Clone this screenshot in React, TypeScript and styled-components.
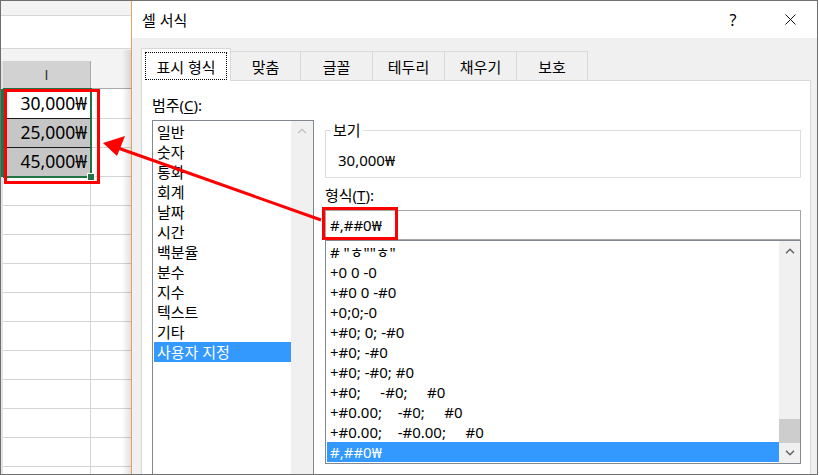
import React from 'react';
import styled, { createGlobalStyle } from 'styled-components';

const UI_FONT = `"Noto Sans", "Noto Sans CJK KR", sans-serif`;

const GlobalStyle = createGlobalStyle`
    html, body {
        margin: 0;
        padding: 0;
        background: #fff;
    }
    body {
        font-family: ${UI_FONT};
    }
    * {
        box-sizing: border-box;
    }
`;

const Frame = styled.div`
    position: relative;
    width: 818px;
    height: 475px;
    border: 1px solid #6f6f6f;
    display: flex;
    overflow: hidden;
    font-family: ${UI_FONT};
    color: #000;
`;

/* ---------- spreadsheet behind the dialog ---------- */

const Sheet = styled.div`
    position: relative;
    width: 130px;
    flex: none;
    display: flex;
    flex-direction: column;
    background: #fff;

    &::after {
        content: '';
        position: absolute;
        top: 49px;
        right: 0;
        bottom: 0;
        width: 9px;
        background: linear-gradient(to right, rgba(0, 0, 0, 0), rgba(0, 0, 0, 0.12));
        pointer-events: none;
    }
`;

const Ribbon = styled.div`
    height: 15px;
    flex: none;
    background: #f3f3f3;
    border-bottom: 1px solid #d6d6d6;
`;

const FormulaBar = styled.div`
    height: 33px;
    flex: none;
    background: #fff;
    border-bottom: 1px solid #d6d6d6;
`;

const HeaderGap = styled.div`
    height: 12px;
    flex: none;
    background: #f3f3f3;
`;

const Row = styled.div<{ $h: number }>`
    display: flex;
    flex: none;
    height: ${p => p.$h}px;
`;

const Strip = styled.div<{ $active?: boolean }>`
    width: 2px;
    flex: none;
    background: ${p => (p.$active ? '#217346' : '#e3e3e3')};
`;

const ColHeader = styled.div`
    width: 88px;
    flex: none;
    display: flex;
    align-items: center;
    justify-content: center;
    background: #d2d2d2;
    border-right: 1px solid #ababab;
    border-bottom: 1px solid #ababab;
    font-family: 'Liberation Sans', sans-serif;
    font-size: 14px;
    color: #333;
`;

const ColHeaderRest = styled.div`
    flex: 1;
    background: #f3f3f3;
    border-bottom: 1px solid #ababab;
`;

const Cell = styled.div<{ $selected?: boolean; $line: string }>`
    width: 88px;
    flex: none;
    display: flex;
    align-items: center;
    justify-content: flex-end;
    padding-right: 3px;
    background: ${p => (p.$selected ? '#c6c6c6' : '#fff')};
    border-right: 1px solid #d4d4d4;
    border-bottom: 1px solid ${p => p.$line};
    font-size: 17.5px;
    line-height: 1;
`;

const CellRest = styled.div`
    flex: 1;
    border-bottom: 1px solid #d4d4d4;
`;

const Selection = styled.div`
    position: absolute;
    left: 2px;
    top: 87px;
    width: 89px;
    height: 90px;
    border: 2px solid #217346;
    pointer-events: none;
`;

const FillHandle = styled.div`
    position: absolute;
    left: 86px;
    top: 172px;
    width: 8px;
    height: 8px;
    background: #217346;
    border: 1px solid #fff;
`;

/* ---------- dialog ---------- */

const Dialog = styled.div`
    flex: 1;
    display: flex;
    flex-direction: column;
    border-left: 1px solid #e2a35f;
    background: #f0f0f0;
`;

const TitleBar = styled.div`
    height: 37px;
    flex: none;
    display: flex;
    align-items: center;
    padding: 0 4px 0 10px;
    background: #fff;
    font-size: 15px;
`;

const Title = styled.div`
    flex: 1;
`;

const TitleButton = styled.div<{ $gap?: number }>`
    width: 46px;
    height: 37px;
    display: flex;
    align-items: center;
    justify-content: center;
    margin-right: ${p => p.$gap ?? 0}px;
    font-size: 16px;
`;

const Body = styled.div`
    flex: 1;
    display: flex;
    flex-direction: column;
    padding: 10px 6px 0 9px;
    min-height: 0;
`;

const Tabs = styled.div`
    height: 32px;
    flex: none;
    display: flex;
    align-items: flex-start;
`;

const ActiveTab = styled.div`
    position: relative;
    z-index: 1;
    width: 90px;
    height: 33px;
    padding: 3px 3px 1px;
    display: flex;
    background: #fff;
    border: 1px solid #d9d9d9;
    border-bottom: none;
    font-size: 15px;
`;

const FocusRing = styled.div`
    flex: 1;
    display: flex;
    align-items: center;
    justify-content: center;
    border: 1px dotted #000;
`;

const Tab = styled.div<{ $w: number }>`
    width: ${p => p.$w}px;
    height: 29px;
    margin-top: 3px;
    display: flex;
    align-items: center;
    justify-content: center;
    background: #f0f0f0;
    border: 1px solid #d9d9d9;
    border-left: none;
    border-bottom: none;
    font-size: 15px;
`;

const Panel = styled.div`
    flex: 1;
    display: flex;
    gap: 11px;
    padding: 14px 9px 0 10px;
    background: #fff;
    border: 1px solid #d9d9d9;
    border-bottom: none;
    min-height: 0;
`;

const LeftColumn = styled.div`
    width: 162px;
    flex: none;
    display: flex;
    flex-direction: column;
`;

const RightColumn = styled.div`
    flex: 1;
    display: flex;
    flex-direction: column;
    padding-top: 27px;
`;

const Label = styled.div`
    height: 20px;
    line-height: 20px;
    font-size: 15px;
    white-space: pre;

    u {
        text-decoration-thickness: 1px;
        text-underline-offset: 2px;
    }
`;

const CategoryLabel = styled(Label)`
    margin-bottom: 5px;
`;

const FormatLabel = styled(Label)`
    margin: 7px 0 5px;
`;

const ListBox = styled.div<{ $h?: number }>`
    display: flex;
    border: 1px solid #828790;
    background: #fff;
    ${p => (p.$h ? `height: ${p.$h}px; flex: none;` : 'flex: 1; border-bottom: none;')}
    overflow: hidden;
`;

const Items = styled.div`
    flex: 1;
    padding: 1px 0 0 1px;
    min-width: 0;
`;

const Item = styled.div<{ $selected?: boolean }>`
    height: 20px;
    line-height: 20px;
    padding-left: 3px;
    font-size: 15px;
    white-space: pre;
    overflow: hidden;
    background: ${p => (p.$selected ? '#3399ff' : 'transparent')};
    color: ${p => (p.$selected ? '#fff' : '#000')};
`;

const ScrollBar = styled.div<{ $w: number }>`
    width: ${p => p.$w}px;
    flex: none;
    display: flex;
    flex-direction: column;
    background: #f0f0f0;
`;

const ScrollButton = styled.div`
    height: 20px;
    flex: none;
    display: flex;
    align-items: center;
    justify-content: center;
`;

const ScrollTrack = styled.div`
    flex: 1;
    display: flex;
    flex-direction: column;
    justify-content: flex-end;
`;

const Thumb = styled.div`
    height: 24px;
    background: #cdcdcd;
`;

const Group = styled.fieldset`
    margin: 0;
    padding: 0 5px 7px;
    border: 1px solid #dcdcdc;
    min-width: 0;
`;

const Legend = styled.legend`
    padding: 0 2px;
    font-size: 15px;
    line-height: 16px;
`;

const Preview = styled.div`
    margin: 12px 0 0 7px;
    height: 20px;
    line-height: 20px;
    font-size: 15px;
`;

const FormatInput = styled.div`
    height: 30px;
    flex: none;
    display: flex;
    align-items: center;
    padding-left: 4px;
    border: 1px solid #a6a6a6;
    font-size: 15px;
`;

/* ---------- annotations ---------- */

const Highlight = styled.div`
    position: absolute;
    border: 3px solid #ff0000;
    pointer-events: none;
`;

const ArrowLayer = styled.svg`
    position: absolute;
    left: -1px;
    top: -1px;
    pointer-events: none;
`;

const Chevron = ({ up, color }: { up?: boolean; color: string }) => (
    <svg width="10" height="6" viewBox="0 0 10 6">
        <polyline
            points={up ? '1,5.2 5,1.2 9,5.2' : '1,0.8 5,4.8 9,0.8'}
            fill="none"
            stroke={color}
            strokeWidth="1.4"
        />
    </svg>
);

const categories = [
    '일반',
    '숫자',
    '통화',
    '회계',
    '날짜',
    '시간',
    '백분율',
    '분수',
    '지수',
    '텍스트',
    '기타',
    '사용자 지정',
];

const formats = [
    '# "ㅎ""ㅎ"',
    '+0 0 -0',
    '+#0 0 -#0',
    '+0;0;-0',
    '+#0; 0; -#0',
    '+#0; -#0',
    '+#0; -#0; #0',
    '+#0;     -#0;     #0',
    '+#0.00;    -#0;     #0',
    '+#0.00;    -#0.00;     #0',
    '#,##0₩',
];

const tabs = [
    { label: '맞춤', w: 70 },
    { label: '글꼴', w: 72 },
    { label: '테두리', w: 72 },
    { label: '채우기', w: 72 },
    { label: '보호', w: 71 },
];

const values = ['30,000₩', '25,000₩', '45,000₩'];

const App = () => (
    <>
        <GlobalStyle />
        <Frame>
            <Sheet>
                <Ribbon />
                <FormulaBar />
                <HeaderGap />
                <Row $h={28}>
                    <Strip />
                    <ColHeader>I</ColHeader>
                    <ColHeaderRest />
                </Row>
                {values.map((v, i) => (
                    <Row key={v} $h={i === 0 ? 30 : 29}>
                        <Strip $active />
                        <Cell $selected={i > 0} $line={i < 2 ? '#1a1a1a' : '#d4d4d4'}>
                            {v}
                        </Cell>
                        <CellRest />
                    </Row>
                ))}
                {Array.from({ length: 11 }).map((_, i) => (
                    <Row key={i} $h={29}>
                        <Strip />
                        <Cell $line="#d4d4d4" />
                        <CellRest />
                    </Row>
                ))}
                <Selection />
                <FillHandle />
            </Sheet>

            <Dialog>
                <TitleBar>
                    <Title>셀 서식</Title>
                    <TitleButton $gap={11}>?</TitleButton>
                    <TitleButton>
                        <svg width="11" height="11" viewBox="0 0 11 11">
                            <path d="M0.5 0.5 L10.5 10.5 M10.5 0.5 L0.5 10.5" stroke="#111" strokeWidth="1" />
                        </svg>
                    </TitleButton>
                </TitleBar>
                <Body>
                    <Tabs>
                        <ActiveTab>
                            <FocusRing>표시 형식</FocusRing>
                        </ActiveTab>
                        {tabs.map(t => (
                            <Tab key={t.label} $w={t.w}>
                                {t.label}
                            </Tab>
                        ))}
                    </Tabs>
                    <Panel>
                        <LeftColumn>
                            <CategoryLabel>
                                범주(<u>C</u>):
                            </CategoryLabel>
                            <ListBox>
                                <Items>
                                    {categories.map(c => (
                                        <Item key={c} $selected={c === '사용자 지정'}>
                                            {c}
                                        </Item>
                                    ))}
                                </Items>
                                <ScrollBar $w={22}>
                                    <ScrollButton>
                                        <Chevron up color="#c4c4c4" />
                                    </ScrollButton>
                                </ScrollBar>
                            </ListBox>
                        </LeftColumn>
                        <RightColumn>
                            <Group>
                                <Legend>보기</Legend>
                                <Preview>30,000₩</Preview>
                            </Group>
                            <FormatLabel>
                                형식(<u>T</u>):
                            </FormatLabel>
                            <FormatInput>#,##0₩</FormatInput>
                            <ListBox $h={224}>
                                <Items>
                                    {formats.map(f => (
                                        <Item key={f} $selected={f === '#,##0₩'}>
                                            {f}
                                        </Item>
                                    ))}
                                </Items>
                                <ScrollBar $w={21}>
                                    <ScrollButton>
                                        <Chevron up color="#606060" />
                                    </ScrollButton>
                                    <ScrollTrack>
                                        <Thumb />
                                    </ScrollTrack>
                                    <ScrollButton>
                                        <Chevron color="#606060" />
                                    </ScrollButton>
                                </ScrollBar>
                            </ListBox>
                        </RightColumn>
                    </Panel>
                </Body>
            </Dialog>

            <Highlight style={{ left: 3, top: 88, width: 96, height: 95 }} />
            <Highlight style={{ left: 321, top: 206, width: 76, height: 33 }} />
            <ArrowLayer width="819" height="475" viewBox="0 0 819 475">
                <line x1="321" y1="220" x2="118" y2="148" stroke="#ff0000" strokeWidth="3" />
                <polygon points="103,143 125,136 117,156" fill="#ff0000" />
            </ArrowLayer>
        </Frame>
    </>
);

export default App;
